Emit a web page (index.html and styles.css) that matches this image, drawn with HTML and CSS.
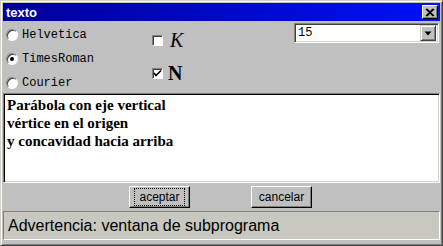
FILE: index.html
```html
<!DOCTYPE html>
<html>
<head>
<meta charset="utf-8">
<link rel="stylesheet" href="styles.css">
</head>
<body>
<div class="window">
  <div class="titlebar">
    <span class="title">texto</span>
    <span class="close"><svg width="10" height="9" viewBox="0 0 10 9"><path d="M1 1 L8 8 M2 1 L9 8 M8 1 L1 8 M9 1 L2 8" stroke="#000" stroke-width="1.2" fill="none"/></svg></span>
  </div>
  <div class="top">
    <div class="radios">
      <label class="radio"><span class="rbtn"></span><span class="rlabel">Helvetica</span></label>
      <label class="radio"><span class="rbtn on"></span><span class="rlabel">TimesRoman</span></label>
      <label class="radio"><span class="rbtn"></span><span class="rlabel">Courier</span></label>
    </div>
    <div class="checks">
      <label class="check"><span class="cbox"></span><span class="klabel">K</span></label>
      <label class="check"><span class="cbox"><svg width="9" height="9" viewBox="0 0 9 9"><path d="M1 4 L3 6.5 L8 1.5" stroke="#000" stroke-width="1.6" fill="none"/></svg></span><span class="nlabel">N</span></label>
    </div>
    <div class="selcol">
      <div class="select"><span class="selval">15</span><span class="arrow"><svg width="8" height="5" viewBox="0 0 8 5"><path d="M0.5 0.5 H7.5 L4 4.5 Z" fill="#000"/></svg></span></div>
    </div>
  </div>
  <div class="textarea">Parábola con eje vertical<br>vértice en el origen<br>y concavidad hacia arriba</div>
  <div class="buttons">
    <button class="btn focus"><span>aceptar</span></button>
    <button class="btn"><span>cancelar</span></button>
  </div>
  <div class="status">Advertencia: ventana de subprograma</div>
</div>
</body>
</html>
```
FILE: styles.css
```css
html, body {
  margin: 0;
  padding: 0;
  background: #c0c0c0;
}
.window {
  width: 443px;
  height: 246px;
  box-sizing: border-box;
  background: #c0c0c0;
  border-top: 1px solid #d4d0c8;
  border-left: 1px solid #d4d0c8;
  border-right: 1px solid #404040;
  border-bottom: 1px solid #404040;
  box-shadow: inset 1px 1px 0 #fff, inset -1px -1px 0 #808080;
  padding: 2px;
  display: flex;
  flex-direction: column;
  font-family: "Liberation Sans", Arial, sans-serif;
}
.titlebar {
  height: 18px;
  background: linear-gradient(to right, #000098, #0010f8);
  display: flex;
  align-items: center;
  justify-content: space-between;
  padding: 0 2px 0 3px;
}
.title {
  color: #fff;
  font-weight: bold;
  font-size: 13px;
  font-family: "Liberation Sans", Arial, sans-serif;
}
.close {
  width: 16px;
  height: 14px;
  box-sizing: border-box;
  background: #c0c0c0;
  border-top: 1px solid #fff;
  border-left: 1px solid #fff;
  border-right: 1px solid #000;
  border-bottom: 1px solid #000;
  box-shadow: inset -1px -1px 0 #808080;
  display: flex;
  align-items: center;
  justify-content: center;
}
.top {
  height: 72px;
  display: flex;
}
.radios {
  width: 145px;
  display: flex;
  flex-direction: column;
  padding-top: 7px;
  gap: 11px;
}
.radio {
  display: flex;
  align-items: center;
  height: 13px;
  padding-left: 3px;
}
.rbtn {
  width: 12px;
  height: 12px;
  box-sizing: border-box;
  border-radius: 50%;
  background: #fff;
  border: 1px solid;
  border-color: #808080 #fff #fff #808080;
  box-shadow: inset 1px 1px 0 #404040;
  position: relative;
  margin-right: 4px;
}
.rbtn.on::after {
  content: "";
  position: absolute;
  left: 3px;
  top: 3px;
  width: 4px;
  height: 4px;
  border-radius: 50%;
  background: #000;
}
.rlabel {
  font-family: "Liberation Mono", "Courier New", monospace;
  font-size: 12px;
  color: #000;
}
.checks {
  width: 146px;
  display: flex;
  flex-direction: column;
  padding-top: 9px;
  gap: 13px;
}
.check {
  display: flex;
  align-items: center;
  height: 20px;
  padding-left: 4px;
}
.cbox {
  width: 11px;
  height: 11px;
  box-sizing: border-box;
  background: #fff;
  border: 1px solid;
  border-color: #808080 #fff #fff #808080;
  box-shadow: inset 1px 1px 0 #404040;
  margin-right: 7px;
  display: flex;
  align-items: center;
  justify-content: center;
}
.klabel {
  font-family: "Liberation Serif", "Times New Roman", serif;
  font-style: italic;
  font-size: 20px;
  color: #000;
}
.nlabel {
  font-family: "Liberation Serif", "Times New Roman", serif;
  font-weight: bold;
  font-size: 20px;
  color: #000;
  margin-left: -2px;
}
.selcol {
  flex: 1;
  padding-top: 2px;
  padding-right: 1px;
}
.select {
  height: 20px;
  box-sizing: border-box;
  background: #fff;
  border: 1px solid;
  border-color: #808080 #fff #fff #808080;
  box-shadow: inset 1px 1px 0 #404040, inset -1px -1px 0 #d4d0c8;
  display: flex;
  align-items: center;
  justify-content: space-between;
  padding: 2px;
}
.selval {
  font-family: "Liberation Mono", "Courier New", monospace;
  font-size: 12px;
  padding-left: 1px;
}
.arrow {
  width: 16px;
  height: 16px;
  box-sizing: border-box;
  background: #c0c0c0;
  border-top: 1px solid #d4d0c8;
  border-left: 1px solid #d4d0c8;
  border-right: 1px solid #404040;
  border-bottom: 1px solid #404040;
  box-shadow: inset 1px 1px 0 #fff, inset -1px -1px 0 #808080;
  display: flex;
  align-items: center;
  justify-content: center;
}
.textarea {
  height: 90px;
  box-sizing: border-box;
  background: #fff;
  border: 1px solid;
  border-color: #808080 #fff #fff #808080;
  box-shadow: inset 1px 1px 0 #000, inset -1px -1px 0 #d4d0c8;
  padding: 2px 3px;
  font-family: "Liberation Serif", "Times New Roman", serif;
  font-weight: bold;
  font-size: 15px;
  line-height: 18px;
  color: #000;
}
.buttons {
  height: 28px;
  display: flex;
  align-items: center;
  padding-left: 126px;
  gap: 61px;
}
.btn {
  width: 61px;
  height: 22px;
  margin: 0;
  padding: 0;
  box-sizing: border-box;
  background: #c0c0c0;
  border-top: 1px solid #fff;
  border-left: 1px solid #fff;
  border-right: 1px solid #000;
  border-bottom: 1px solid #000;
  box-shadow: inset -1px -1px 0 #808080;
  font-family: "Liberation Sans", Arial, sans-serif;
  font-size: 12px;
  color: #000;
  display: flex;
  align-items: center;
  justify-content: center;
}
.btn.focus span {
  outline: 1px dotted #000;
  padding: 1px 4px;
}
.status {
  height: 29px;
  box-sizing: border-box;
  margin-top: 0;
  background: #c8c8c0;
  border: 1px solid;
  border-color: #808080 #fff #fff #808080;
  font-family: "Liberation Sans", Arial, sans-serif;
  font-size: 16px;
  color: #000;
  display: flex;
  align-items: center;
  padding-left: 4px;
}
```
